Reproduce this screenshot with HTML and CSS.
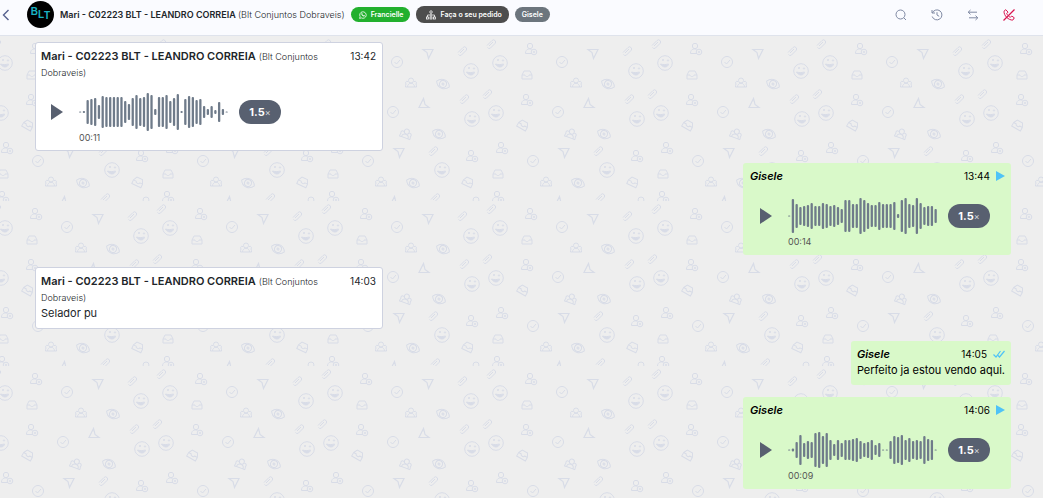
FILE: index.html
```html
<!DOCTYPE html>
<html lang="pt-BR">
<head>
  <meta charset="UTF-8" />
  <meta name="viewport" content="width=device-width, initial-scale=1.0"/>
  <title>Atendimento</title>
  <link rel="stylesheet" href="styles.css">
</head>
<body>

<header class="topbar">
  <button class="icon-btn back" aria-label="Voltar">
    <svg width="8" height="12" viewBox="0 0 8 12"><path d="M6.5 1L1.5 6l5 5" fill="none" stroke="#56618f" stroke-width="1.4"/></svg>
  </button>
  <div class="avatar">
    <span>B</span><span class="mid">L</span><span class="low">T</span>
  </div>
  <h1 class="contact">Mari - C02223 BLT - LEANDRO CORREIA <small>(Blt Conjuntos Dobraveis)</small></h1>
  <div class="tags">
    <span class="tag tag-green">
      <svg width="8" height="8" viewBox="0 0 16 16"><path d="M1.2 14.8l1-3.6A6.5 6.5 0 1 1 4.8 13.800z" fill="none" stroke="#fff" stroke-width="1.6"/><path d="M5.300 4.500l1.200-.2.9 1.900-.7 1c.6 1 1.300 1.600 2.300 2l.9-1 1.900.9c0 1.300-1 1.900-2 1.800-2.600-.4-5-2.700-5.200-4.900 0-.6.3-1.200.7-1.500z" fill="#fff"/></svg>
      Francielle
    </span>
    <span class="tag tag-dark">
      <svg width="10" height="10" viewBox="0 0 20 20" fill="none" stroke="#fff" stroke-width="1.500"><circle cx="10" cy="4" r="2.500"/><path d="M10 6.500V14M3 14v-4h14v4"/><rect x="1" y="14" width="4" height="4"/><rect x="8" y="14" width="4" height="4"/><rect x="15" y="14" width="4" height="4"/></svg>
      Faça o seu pedido
    </span>
    <span class="tag tag-gray">Gisele</span>
  </div>
  <nav class="actions">
    <button class="icon-btn" aria-label="Buscar">
      <svg width="12" height="12" viewBox="0 0 12 12"><circle cx="5.500" cy="5.500" r="4.500"/><path d="M8.800 8.800L11 11"/></svg>
    </button>
    <button class="icon-btn" aria-label="Histórico">
      <svg width="12" height="12" viewBox="0 0 12 12"><path d="M1 1v3h3M1.300 4A5 5 0 1 1 1.200 7.500M6 3.200V6l2.200 1.300"/></svg>
    </button>
    <button class="icon-btn" aria-label="Transferir">
      <svg width="12" height="12" viewBox="0 0 12 12"><path d="M3.500 1L1.200 3.200 3.500 5.400M1.200 3.200H10M8.500 6.600l2.300 2.200L8.500 11M10.800 8.800H2"/></svg>
    </button>
    <button class="icon-btn end-call" aria-label="Encerrar">
      <svg width="12" height="12" viewBox="0 0 12 12"><path d="M1 2.200L2.800.7 5 3.100 3.700 4.600C4.400 6 5.800 7.500 7.400 8.300L8.700 7l2.600 1.800-1.500 2.300C5.500 11.300.7 6.500 1 2.200z"/><path d="M11.500.5L.5 11.500" stroke-width="1.300"/></svg>
    </button>
  </nav>
</header>

<main class="chat">
  <svg class="wallpaper" aria-hidden="true">
    <defs>
      <g id="check"><circle r="5.500"/><path d="M-2.500 0l2 2 3.500-4"/></g>
      <g id="plane"><path d="M-5-4.500H5L.5 4.500-1-1.500z" stroke-width="1.200"/></g>
      <g id="clip"><path d="M-4 1.500L1-3.500a2 2 0 0 1 3 3L-.5 4a2 2 0 0 1-3-.5M-2 2l4-4"/></g>
      <g id="smile"><circle r="7.300"/><circle cx="-2" cy="-3" r=".7"/><circle cx="3" cy="-2.500" r=".7"/><path d="M-4.500 1C-1 2 1 1.500 3.500 1 3 5-2.500 5-4.500 1z" class="solid"/></g>
      <g id="group"><circle cy="-2.500" r="2.500"/><path d="M-3.500 4c0-5 7-5 7 0zM-3-1.500c-2-1-3 1-2 2.500-.500 1-.5 2-.5 3h2M3-1.500c2-1 3 1 2 2.500.5 1 .5 2 .5 3h-2"/></g>
      <g id="eye" transform="rotate(25)"><path d="M-7 0C-4-6 4-6 7 0 4 6-4 6-7 0z"/><circle r="3.500"/><circle r="1"/></g>
      <g id="tray"><path d="M-5 0l2-4h6l2 4v4H-5zM-5 0h3c0 2 4 2 4 0h3"/></g>
      <g id="user"><circle cx="-1" cy="-3" r="2.700"/><path d="M-5.500 4.500c0-5 4-5 6-4M-5.500 4.500H1"/><circle cx="3" cy="3" r="2.800"/><path d="M1.800 3h2.400M3 1.800v2.400"/></g>
      <pattern id="doodles" x="44" y="0" width="165" height="165" patternUnits="userSpaceOnUse">
        <g fill="none" stroke="#d8dce7" stroke-width="1">
          <use href="#check" x="23" y="26"/>
          <use href="#plane" x="54" y="18"/>
          <use href="#clip" x="88" y="15"/>
          <use href="#clip" x="117" y="8"/>
          <use href="#user" x="157" y="13"/>
          <use href="#smile" x="97" y="35"/>
          <use href="#smile" x="126" y="27"/>
          <use href="#tray" x="153" y="39"/>
          <use href="#group" x="37" y="47"/>
          <use href="#eye" x="69" y="48"/>
          <use href="#plane" transform="translate(50 67) rotate(180)"/>
          <use href="#clip" x="90" y="63"/>
          <use href="#clip" x="113" y="58"/>
          <use href="#user" x="153" y="64"/>
          <use href="#check" x="19" y="76"/>
          <use href="#smile" x="98" y="83"/>
          <use href="#smile" x="122" y="77"/>
          <use href="#tray" transform="translate(149 89) rotate(30)"/>
          <use href="#group" transform="translate(32 98) rotate(20)"/>
          <use href="#eye" x="65" y="98"/>
          <use href="#plane" x="25" y="117"/>
          <use href="#clip" x="59" y="115"/>
          <use href="#user" x="98" y="120"/>
          <use href="#user" x="128" y="112"/>
          <use href="#check" x="159" y="125"/>
          <use href="#smile" x="68" y="134"/>
          <use href="#tray" x="124" y="138"/>
          <use href="#group" x="7" y="146"/>
          <use href="#eye" x="39" y="147"/>
          <use href="#tray" transform="translate(94 146) rotate(25)"/>
          <use href="#plane" transform="translate(21 165) rotate(180)"/>
          <use href="#clip" x="61" y="162"/>
          <use href="#user" x="124" y="161"/>
          <circle cx="102" cy="164" r="3"/>
        </g>
      </pattern>
    </defs>
    <rect width="100%" height="100%" fill="url(#doodles)"/>
  </svg>

  <article class="message received">
    <div class="message-head">
      <div class="sender"><b>Mari - C02223 BLT - LEANDRO CORREIA</b> <small>(Blt Conjuntos Dobraveis)</small></div>
      <time>13:42</time>
    </div>
    <div class="audio">
      <button class="play" aria-label="Reproduzir"></button>
      <div class="track">
        <svg class="wave" viewBox="0 0 149 40" data-levels="1 2 24 26 28 14 32 30 30 30 30 30 22 16 28 34 28 30 38 34 6 30 30 34 22 28 36 2 26 32 30 24 26 12 6 12 4 20 6 1"></svg>
        <span class="duration">00:11</span>
      </div>
      <button class="speed">1.5<span>×</span></button>
    </div>
  </article>

  <article class="message sent voice">
    <div class="message-head">
      <div class="sender"><b>Gisele</b></div>
      <time>13:44</time>
      <svg class="status" width="9" height="10" viewBox="0 0 9 10"><path d="M0 0l9 5-9 5z" fill="#4fc3f7"/></svg>
    </div>
    <div class="audio">
      <button class="play" aria-label="Reproduzir"></button>
      <div class="track">
        <svg class="wave" viewBox="0 0 149 40" data-levels="1 34 24 18 20 22 26 20 20 26 24 20 22 18 14 32 32 24 24 36 32 26 22 22 28 24 24 24 28 4 32 36 24 22 36 26 18 20 20 14"></svg>
        <span class="duration">00:14</span>
      </div>
      <button class="speed">1.5<span>×</span></button>
    </div>
  </article>

  <article class="message received">
    <div class="message-head">
      <div class="sender"><b>Mari - C02223 BLT - LEANDRO CORREIA</b> <small>(Blt Conjuntos Dobraveis)</small></div>
      <time>14:03</time>
    </div>
    <p>Selador pu</p>
  </article>

  <article class="message sent">
    <div class="message-head">
      <div class="sender"><b>Gisele</b></div>
      <time>14:05</time>
      <svg class="status" width="12" height="8" viewBox="0 0 12 8"><path d="M.5 4.500L3 7l4.500-6M5 5.500L6.500 7 11.500 1" fill="none" stroke="#4fc3f7" stroke-width="1.200"/></svg>
    </div>
    <p>Perfeito ja estou vendo aqui.</p>
  </article>

  <article class="message sent voice">
    <div class="message-head">
      <div class="sender"><b>Gisele</b></div>
      <time>14:06</time>
      <svg class="status" width="9" height="10" viewBox="0 0 9 10"><path d="M0 0l9 5-9 5z" fill="#4fc3f7"/></svg>
    </div>
    <div class="audio">
      <button class="play" aria-label="Reproduzir"></button>
      <div class="track">
        <svg class="wave" viewBox="0 0 149 40" data-levels="1 3 16 30 14 18 16 34 36 28 34 20 12 20 14 20 20 22 24 18 14 16 20 10 14 1 1 18 28 26 30 20 24 18 20 18 28 22 20 1"></svg>
        <span class="duration">00:09</span>
      </div>
      <button class="speed">1.5<span>×</span></button>
    </div>
  </article>
</main>

<script>
  // one rounded bar per audio level
  document.querySelectorAll('.wave').forEach(wave => {
    const levels = wave.dataset.levels.split(' ').map(Number);
    const step = 146.5 / (levels.length - 1);
    levels.forEach((level, i) => {
      const bar = document.createElementNS('http://www.w3.org/2000/svg', 'rect');
      bar.setAttribute('x', i * step);
      bar.setAttribute('y', 20 - level / 2);
      bar.setAttribute('width', 2.3);
      bar.setAttribute('height', level);
      bar.setAttribute('rx', 1);
      wave.appendChild(bar);
    });
  });
</script>

</body>
</html>
```
FILE: styles.css
```css
* {
  box-sizing: border-box;
}

body {
  margin: 0;
  min-height: 100vh;
  display: flex;
  flex-direction: column;
  font-family: Inter, "Liberation Sans", sans-serif;
  font-size: 11px;
  line-height: 16px;
  color: #212529;
  background-color: #eeeeee;
}

button {
  padding: 0;
  border: 0;
  background: none;
  font: inherit;
  cursor: pointer;
}

small {
  font-size: 9px;
  font-weight: 300;
  line-height: 12px;
}

/* top bar */
.topbar {
  display: flex;
  align-items: center;
  height: 36px;
  padding: 0 28px 6px 2px;
  background-color: #fafbff;
  border-bottom: 1px solid #dfe3ec;
}

.icon-btn {
  display: flex;
}

.back {
  margin-right: 17px;
}

.avatar {
  display: flex;
  align-items: flex-start;
  justify-content: center;
  width: 27px;
  height: 27px;
  padding-top: 5px;
  border-radius: 50%;
  background-color: #000;
  color: #1ab3c4;
  font-family: "Liberation Sans", sans-serif;
  font-size: 10px;
  font-weight: 700;
  line-height: 12px;
}

.avatar .mid {
  padding-top: 3px;
}

.avatar .low {
  padding-top: 4px;
}

.contact {
  margin: 0 6px;
  font-size: 9px;
  font-weight: 600;
  white-space: nowrap;
}

.tags {
  display: flex;
  align-items: center;
  gap: 6px;
}

.tag {
  display: flex;
  align-items: center;
  gap: 4px;
  height: 15px;
  padding: 0 7px;
  border-radius: 8px;
  color: #fff;
  font-size: 7px;
  font-weight: 600;
  white-space: nowrap;
}

.tag-green {
  padding: 0 7px 0 8px;
  background-color: #22b02e;
}

.tag-dark {
  height: 17px;
  padding: 0 7px 0 10px;
  background-color: #4d4d4d;
}

.tag-gray {
  background-color: #6c757d;
}

.actions {
  display: flex;
  gap: 24px;
  margin-left: auto;
}

.actions svg {
  fill: none;
  stroke: #7f89a3;
  stroke-width: 1;
}

.actions .end-call svg {
  stroke: #d9154f;
}

/* conversation */
.chat {
  position: relative;
  flex: 1;
  display: flex;
  flex-direction: column;
  align-items: flex-start;
  gap: 12px;
  padding: 6px 32px 9px 35px;
}

.wallpaper {
  position: absolute;
  top: 0;
  left: 0;
  width: 100%;
  height: 100%;
}

.wallpaper .solid {
  fill: #d8dce7;
}

.message {
  position: relative;
  max-width: 348px;
  padding: 5px 6px 7px;
  border-radius: 3px;
}

.received {
  padding-left: 5px;
  background-color: #fff;
  border: 1px solid #ced2e0;
}

.sent {
  align-self: flex-end;
  background-color: #d9f9c9;
  color: #000;
}

.voice {
  width: 268px;
  min-height: 92px;
  padding-left: 7px;
}

.message-head {
  display: flex;
  align-items: flex-start;
}

.sender {
  flex: 1;
  padding-right: 24px;
}

.sender b {
  font-weight: 600;
}

.sent b {
  font-style: italic;
}

time {
  font-size: 10px;
}

.status {
  align-self: center;
  margin-left: 6px;
}

.message p {
  margin: 0;
}

/* audio player */
.audio {
  display: flex;
  align-items: flex-start;
  gap: 11px;
  padding: 12px 0 0 10px;
  margin-bottom: -1px;
}

.play {
  width: 12px;
  height: 16px;
  margin: 12px 5px 0 0;
  background-color: #586070;
  clip-path: polygon(0 0, 100% 50%, 0 100%);
}

.track {
  display: flex;
  flex-direction: column;
  width: 149px;
}

.wave {
  height: 40px;
  fill: #6f7b8a;
}

.duration {
  font-size: 9px;
  line-height: 12px;
  color: #555;
}

.speed {
  width: 42px;
  height: 24px;
  margin-top: 8px;
  border-radius: 12px;
  background-color: #586070;
  color: #fff;
  font-weight: 700;
}

.speed span {
  font-size: 9px;
  font-weight: 400;
  color: #d3d7de;
}
```
